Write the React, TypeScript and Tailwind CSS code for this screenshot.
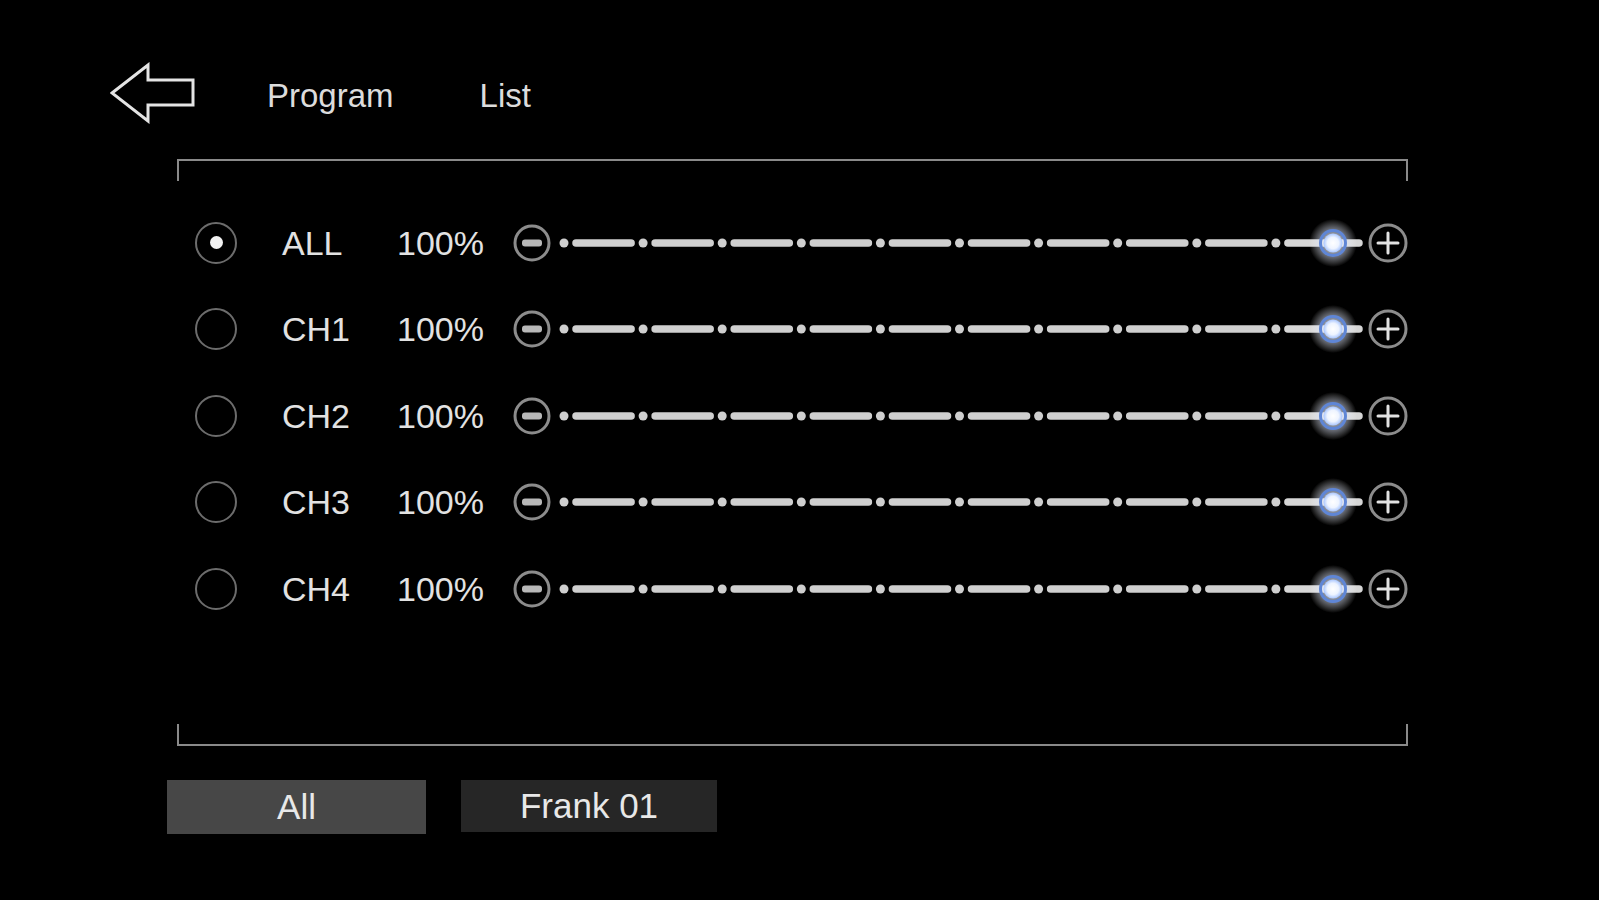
import React from 'react'

const channels = ['ALL', 'CH1', 'CH2', 'CH3', 'CH4']

function BackArrow() {
  return (
    <svg width="86" height="62" viewBox="0 0 86 62" fill="none">
      <path
        d="M2 31 L38 3 L38 18 L83 18 L83 43 L38 43 L38 59 Z"
        stroke="#e4e4e4"
        strokeWidth="3"
        strokeLinejoin="miter"
      />
    </svg>
  )
}

function Radio({ checked }: { checked: boolean }) {
  return (
    <div className="flex h-[42px] w-[42px] shrink-0 items-center justify-center rounded-full border-[2.5px] border-[#6c6c6c]">
      {checked && <div className="h-[13px] w-[13px] rounded-full bg-[#f2f2f2]" />}
    </div>
  )
}

function MinusIcon() {
  return (
    <svg width="38" height="38" viewBox="0 0 38 38" className="shrink-0">
      <circle cx="19" cy="19" r="17" fill="none" stroke="#8c8c8c" strokeWidth="3" />
      <rect x="9" y="15.5" width="20" height="7" rx="3" fill="#b8b8b8" />
    </svg>
  )
}

function PlusIcon() {
  return (
    <svg width="40" height="40" viewBox="0 0 40 40" className="shrink-0">
      <circle cx="20" cy="20" r="18" fill="none" stroke="#8c8c8c" strokeWidth="3" />
      <path d="M20 10 V30 M10 20 H30" stroke="#e2e2e2" strokeWidth="3" strokeLinecap="round" />
    </svg>
  )
}

// dotted-dash track with the glowing knob at the right end
function Track({ id }: { id: string }) {
  const dots = Array.from({ length: 10 }, (_, i) => 13 + i * 79.1)
  const knob = 782
  return (
    <svg width="817" height="50" viewBox="0 0 817 50" className="shrink-0">
      <defs>
        <radialGradient id={`glow-${id}`}>
          <stop offset="0" stopColor="#ffffff" stopOpacity="0.95" />
          <stop offset="0.55" stopColor="#dfe8ff" stopOpacity="0.5" />
          <stop offset="1" stopColor="#ffffff" stopOpacity="0" />
        </radialGradient>
        <radialGradient id={`core-${id}`}>
          <stop offset="0" stopColor="#ffffff" />
          <stop offset="0.6" stopColor="#eef4ff" />
          <stop offset="1" stopColor="#a9c6ff" />
        </radialGradient>
      </defs>
      {dots.map((c, i) => (
        <circle key={`d${i}`} cx={c} cy="25" r="4.5" fill="#cfcfcf" />
      ))}
      {dots.slice(0, -1).map((c, i) => (
        <line
          key={`l${i}`}
          x1={c + 12}
          x2={dots[i + 1] - 12}
          y1="25"
          y2="25"
          stroke="#cfcfcf"
          strokeWidth="7.5"
          strokeLinecap="round"
        />
      ))}
      <line x1={dots[9] + 12} x2="808" y1="25" y2="25" stroke="#d6d6d6" strokeWidth="7.5" strokeLinecap="round" />
      <circle cx={knob} cy="25" r="24" fill={`url(#glow-${id})`} />
      <circle cx={knob} cy="25" r="12.5" fill="none" stroke="#5f86d6" strokeWidth="3" />
      <circle cx={knob} cy="25" r="9.5" fill={`url(#core-${id})`} />
    </svg>
  )
}

function ChannelRow({ name, index }: { name: string; index: number }) {
  return (
    <div className="flex h-[86.5px] items-center pl-[18px]">
      <Radio checked={index === 0} />
      <div className="ml-[45px] w-[115px] text-[34px] leading-none text-[#e2e2e2]">{name}</div>
      <div className="w-[116px] text-[34px] leading-none text-[#e2e2e2]">100%</div>
      <MinusIcon />
      <Track id={String(index)} />
      <PlusIcon />
    </div>
  )
}

export default function App() {
  return (
    <div className="min-h-[900px] w-full overflow-hidden bg-black font-['Liberation_Sans',Arial,sans-serif]">
      {/* Header */}
      <div className="mt-[62px] flex h-[62px] items-center pl-[110px]">
        <BackArrow />
        <span className="ml-[71px] mt-[4px] text-[33px] leading-none text-[#dcdcdc]">Program</span>
        <span className="ml-[86px] mt-[4px] text-[33px] leading-none text-[#dcdcdc]">List</span>
      </div>

      {/* Frame */}
      <div className="ml-[177px] mt-[35px] w-[1231px]">
        <div className="h-[22px] border-x-2 border-t-2 border-[#8a8a8a]" />
        <div className="pt-[18.5px]">
          {channels.map((c, i) => (
            <ChannelRow key={c} name={c} index={i} />
          ))}
        </div>
        <div className="h-[91.5px]" />
        <div className="h-[22px] border-x-2 border-b-2 border-[#8a8a8a]" />
      </div>

      {/* Bottom tabs */}
      <div className="ml-[167px] mt-[34px] flex gap-[35px]">
        <button className="flex h-[54px] w-[259px] items-center justify-center bg-[#474747] text-[35px] leading-none text-[#e8e8e8]">
          All
        </button>
        <button className="flex h-[52px] w-[256px] items-center justify-center bg-[#262626] text-[35px] leading-none text-[#e8e8e8]">
          Frank 01
        </button>
      </div>
    </div>
  )
}
